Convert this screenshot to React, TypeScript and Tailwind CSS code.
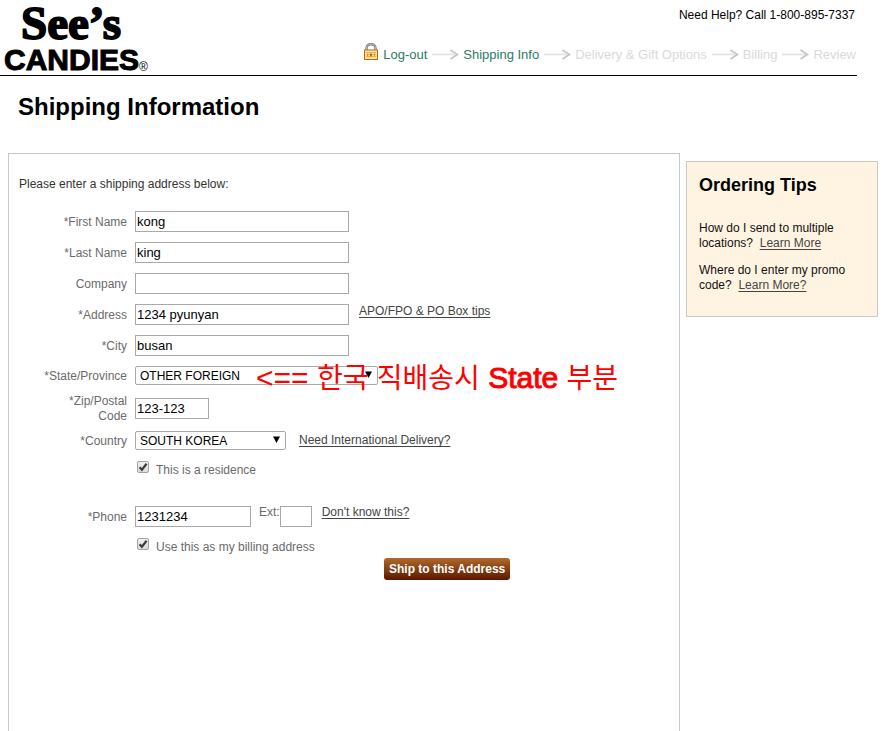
import React from 'react';

interface FieldProps {
  id: string;
  label: string;
  className?: string;
  children: React.ReactNode;
}

const Field: React.FC<FieldProps> = ({ id, label, className = 'mt-[10px]', children }) => (
  <div className={`flex items-center gap-2 ${className}`}>
    <label htmlFor={id} className="w-[108px] shrink-0 pt-[2px] text-right whitespace-nowrap text-[#6b6b6b]">
      {label.split('\n').map((line) => (
        <span key={line} className="block">{line}</span>
      ))}
    </label>
    {children}
  </div>
);

interface TextBoxProps {
  id: string;
  value?: string;
  width?: string;
}

const TextBox: React.FC<TextBoxProps> = ({ id, value = '', width = 'w-[214px]' }) => (
  <input
    id={id}
    type="text"
    defaultValue={value}
    className={`h-[21px] shrink-0 border border-[#a9a9a9] bg-white px-px text-[13px] text-black ${width}`}
  />
);

interface DropDownProps {
  id: string;
  value: string;
  width: string;
}

const DropDown: React.FC<DropDownProps> = ({ id, value, width }) => (
  <div className={`relative shrink-0 ${width}`}>
    <select id={id} defaultValue={value} className="block h-[19px] w-full appearance-none rounded-[2px] border border-[#a9a9a9] bg-white pl-1 text-[12px] leading-4 text-black">
      <option>{value}</option>
    </select>
    <svg viewBox="0 0 7 7" className="pointer-events-none absolute top-[5px] right-[6px] h-[7px] w-[7px]">
      <path d="M0 .5h7L3.500 7z" fill="#000" />
    </svg>
  </div>
);

interface TickProps {
  id: string;
  label: string;
  className: string;
}

const Tick: React.FC<TickProps> = ({ id, label, className }) => (
  <div className={`flex h-4 pl-[118px] ${className}`}>
    <span className="relative block h-[13px] w-[13px]">
      <input id={id} type="checkbox" defaultChecked className="peer block h-3 w-3 appearance-none rounded-[2px] border border-[#a3a3a3] bg-linear-to-b from-[#f0f0f0] to-[#dcdcdc]" />
      <svg viewBox="0 0 12 12" className="pointer-events-none absolute top-0 left-0 hidden h-3 w-3 peer-checked:block">
        <path d="M2.6 6.2 4.9 8.7 9.6 2.8" fill="none" stroke="#3c3c3c" strokeWidth="2.2" />
      </svg>
    </span>
    <label htmlFor={id} className="pt-[2px] pl-[6px] text-[#6b6b6b]">{label}</label>
  </div>
);

const Arrow: React.FC = () => (
  <svg viewBox="0 0 27 11" className="h-[11px] w-[27px] shrink-0" fill="none">
    <path d="M0 5.5h25" stroke="#e2e2e2" strokeWidth="1.6" />
    <path d="M18.5 1 25.5 5.5 18.5 10" stroke="#c6c6c6" strokeWidth="1.7" />
  </svg>
);

const Lock: React.FC = () => (
  <svg viewBox="0 0 14 17" className="h-[17px] w-[14px] shrink-0" fill="none">
    <path d="M2.5 8V5.2C2.5 2.4 4.4 1.2 7 1.2s4.5 1.2 4.5 4V8" stroke="#747b80" strokeWidth="2.4" />
    <path d="M2.5 7V5.2C2.5 2.4 4.4 1.2 7 1.2s4.5 1.2 4.5 4V7" stroke="#c9ced1" strokeWidth=".8" />
    <rect x=".5" y="7" width="13" height="9.5" fill="#fbe3a0" stroke="#bd6a18" />
    <path d="M2 9.5h10M2 11.5h10M2 13.5h10" stroke="#f2b544" />
    <rect x="6" y="10.500" width="2" height="3" fill="#b8701c" />
    <path d="M3.500 10.500v3M10.500 10.500v3" stroke="#e99a2b" />
  </svg>
);

const Logo: React.FC = () => (
  <svg viewBox="0 0 150 75" role="img" aria-label="See's Candies" className="block h-[75px] w-[150px] shrink-0">
    <text x="21" y="39" fontFamily="'Liberation Serif', serif" fontWeight="700" fontSize="47" stroke="#000" strokeWidth="1.8">See’s</text>
    <text x="4" y="70" fontFamily="'Liberation Sans', sans-serif" fontWeight="700" fontSize="30" stroke="#000" strokeWidth="1">CANDIES</text>
    <text x="139" y="71" fontFamily="'Liberation Sans', sans-serif" fontSize="12">®</text>
  </svg>
);

const steps = [
  { name: 'Shipping Info', active: true },
  { name: 'Delivery & Gift Options', active: false },
  { name: 'Billing', active: false },
  { name: 'Review', active: false },
];

const link = 'text-[#444] underline underline-offset-2';

const App: React.FC = () => {
  return (
    <div className="flex min-h-screen flex-col bg-white font-['Liberation_Sans',sans-serif] text-[12px] leading-[15px] text-[#333]">
      <header className="mr-[29px] flex justify-between border-b border-black">
        <Logo />
        <div className="flex flex-col items-end pt-2">
          <p className="pr-[2px] text-black">Need Help? Call 1-800-895-7337</p>
          <nav className="mt-[18px] flex items-center gap-[5px] pr-px text-[13px]">
            <Lock />
            <a href="#logout" className="pt-[6px] text-[#2b7b68]">Log-out</a>
            {steps.map((step) => (
              <span key={step.name} className="flex items-center gap-1 pt-[6px]">
                <Arrow />
                <a href="#step" className={step.active ? 'text-[#2b7b68]' : 'text-[#dadada]'}>{step.name}</a>
              </span>
            ))}
          </nav>
        </div>
      </header>

      <h1 className="mt-4 pl-[18px] text-[24px] leading-[30px] font-bold text-black">Shipping Information</h1>

      <main className="mt-[31px] flex flex-1 items-stretch gap-[6px] px-2">
        <form className="min-w-0 flex-1 border border-b-0 border-[#c8c8c8] px-[10px] pt-[23px]">
          <p>Please enter a shipping address below:</p>

          <Field id="first" label="*First Name" className="mt-[19px]"><TextBox id="first" value="kong" /></Field>
          <Field id="last" label="*Last Name"><TextBox id="last" value="king" /></Field>
          <Field id="company" label="Company"><TextBox id="company" /></Field>
          <Field id="address" label="*Address">
            <TextBox id="address" value="1234 pyunyan" />
            <a href="#apo" className={`ml-[2px] self-start ${link}`}>APO/FPO &amp; PO Box tips</a>
          </Field>
          <Field id="city" label="*City"><TextBox id="city" value="busan" /></Field>
          <Field id="state" label="*State/Province" className="relative mt-[10px]">
            <DropDown id="state" value="OTHER FOREIGN" width="w-[243px]" />
            <p className="pointer-events-none absolute -top-1 left-[237px] font-['Liberation_Sans','Noto_Sans_CJK_KR',sans-serif] text-[30px] leading-8 whitespace-nowrap text-[#ff0000]">
              {'<== '}
              <span className="text-[28px]">한국</span> <span className="text-[28px]">직배송시</span>{' '}
              <span className="[-webkit-text-stroke:1px_#ff0000]">State</span> <span className="text-[28px]">부분</span>
            </p>
          </Field>
          <Field id="zip" label={'*Zip/Postal\nCode'} className="mt-[7px]"><TextBox id="zip" value="123-123" width="w-[74px]" /></Field>
          <Field id="country" label="*Country" className="mt-[7px]">
            <DropDown id="country" value="SOUTH KOREA" width="w-[151px]" />
            <a href="#international" className={`ml-[5px] ${link}`}>Need International Delivery?</a>
          </Field>
          <Tick id="residence" label="This is a residence" className="mt-[11px]" />
          <Field id="phone" label="*Phone" className="mt-[29px]">
            <TextBox id="phone" value="1231234" width="w-[116px]" />
            <label htmlFor="ext" className="-mt-px self-start text-[#6b6b6b]">Ext:</label>
            <span className="-ml-2 flex"><TextBox id="ext" width="w-[32px]" /></span>
            <a href="#phone-help" className={`-mt-px ml-[2px] self-start ${link}`}>Don't know this?</a>
          </Field>
          <Tick id="billing" label="Use this as my billing address" className="mt-[11px]" />
          <button type="button" className="mt-1 ml-[365px] block h-[22px] rounded-[3px] bg-linear-to-b from-[#b06a2c] to-[#5c1600] px-[5px] pt-px font-bold whitespace-nowrap text-white">
            Ship to this Address
          </button>
        </form>

        <aside className="mt-2 w-48 shrink-0 self-start border border-[#ccc6c6] bg-[#fff4e2] px-3 pt-3 pb-[23px] text-[#111]">
          <h2 className="text-[18px] leading-[22px] font-bold text-black">Ordering Tips</h2>
          <p className="mt-[25px]">How do I send to multiple<br />locations? &nbsp;<a href="#multiple" className={link}>Learn More</a></p>
          <p className="mt-3">Where do I enter my promo<br />code? &nbsp;<a href="#promo" className={link}>Learn More?</a></p>
        </aside>
      </main>
    </div>
  );
};

export default App;
